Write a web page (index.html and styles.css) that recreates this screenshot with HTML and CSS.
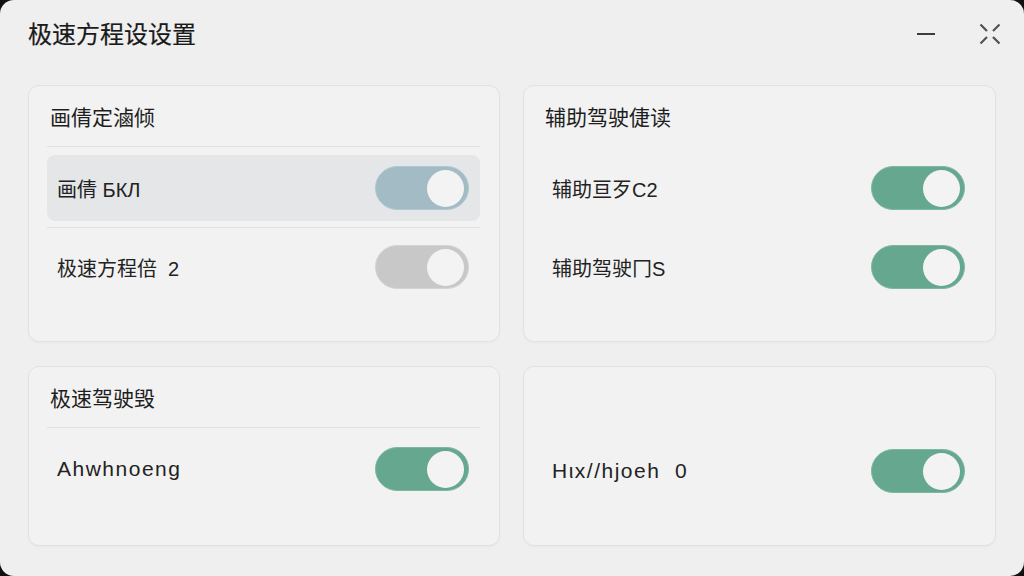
FILE: index.html
```html
<!DOCTYPE html>
<html lang="zh">
<head>
<meta charset="utf-8">
<title>极速方程设设置</title>
<link rel="stylesheet" href="styles.css">
</head>
<body>
<div class="window">
  <header class="titlebar">
    <h1 class="title">极速方程设设置</h1>
    <div class="controls">
      <span class="ctrl minimize"><span class="dash"></span></span>
      <span class="ctrl close">
        <svg width="22" height="22" viewBox="0 0 22 22" fill="none" stroke="#505050" stroke-width="2.2" stroke-linecap="butt">
          <line x1="1.5" y1="1.5" x2="8" y2="8"/>
          <line x1="20.5" y1="1.5" x2="14" y2="8"/>
          <line x1="1.5" y1="20.5" x2="8" y2="14"/>
          <line x1="20.5" y1="20.5" x2="14" y2="14"/>
        </svg>
      </span>
    </div>
  </header>
  <main class="grid">
    <section class="card">
      <div class="card-head">画倩定滷倾</div>
      <div class="row active">
        <span class="label">画倩 БКЛ</span>
        <span class="toggle blue"><span class="knob"></span></span>
      </div>
      <div class="divider"></div>
      <div class="row">
        <span class="label">极速方程倍&nbsp;&nbsp;2</span>
        <span class="toggle grey"><span class="knob"></span></span>
      </div>
    </section>
    <section class="card plain">
      <div class="card-head">辅助驾驶倢读</div>
      <div class="row">
        <span class="label">辅助亘歹C2</span>
        <span class="toggle green"><span class="knob"></span></span>
      </div>
      <div class="divider"></div>
      <div class="row">
        <span class="label">辅助驾驶冂S</span>
        <span class="toggle green"><span class="knob"></span></span>
      </div>
    </section>
    <section class="card">
      <div class="card-head">极速驾驶毁</div>
      <div class="row">
        <span class="label latin">Ahwhnoeng</span>
        <span class="toggle green"><span class="knob"></span></span>
      </div>
    </section>
    <section class="card plain">
      <div class="card-head"></div>
      <div class="row low">
        <span class="label latin">Hιx//hjoeh&nbsp;&nbsp;0</span>
        <span class="toggle green"><span class="knob"></span></span>
      </div>
    </section>
  </main>
</div>
</body>
</html>
```

FILE: styles.css
```css
* { box-sizing: border-box; margin: 0; padding: 0; }

html, body {
  width: 1024px;
  height: 576px;
  background: #111;
  overflow: hidden;
}

body {
  font-family: "Liberation Sans", "Noto Sans CJK SC", sans-serif;
  color: #222;
}

.window {
  width: 1024px;
  height: 576px;
  background: #efefef;
  border-radius: 14px;
  display: flex;
  flex-direction: column;
  padding: 0 28px 30px 28px;
}

.titlebar {
  height: 85px;
  display: flex;
  align-items: flex-start;
  justify-content: space-between;
}

.title {
  font-family: "Noto Sans CJK SC", sans-serif;
  font-size: 24px;
  font-weight: 400;
  line-height: 34px;
  margin-top: 16px;
  color: #1a1a1a;
  -webkit-text-stroke: 0.2px #1a1a1a;
}

.controls {
  display: flex;
  align-items: center;
  gap: 44px;
  margin-top: 23px;
  margin-right: -5px;
}

.ctrl {
  display: flex;
  align-items: center;
  justify-content: center;
  height: 22px;
}

.dash {
  display: block;
  width: 18px;
  height: 2px;
  background: #3c3c3c;
}

.grid {
  flex: 1;
  display: grid;
  grid-template-columns: 472px 473px;
  grid-template-rows: 257px 180px;
  column-gap: 23px;
  row-gap: 24px;
}

.card {
  background: #f2f2f2;
  border: 1px solid #e2e2e2;
  border-radius: 11px;
  padding: 16px 19px 0 18px;
  box-shadow: 0 1px 2px rgba(0, 0, 0, 0.03);
}

.card-head {
  font-family: "Noto Sans CJK SC", sans-serif;
  font-size: 21px;
  line-height: 28px;
  height: 45px;
  padding: 0 3px;
  border-bottom: 1px solid #e1e1e1;
  color: #1e1e1e;
}

.plain .card-head,
.plain .divider {
  border-color: transparent;
  background: transparent;
}

.row {
  height: 66px;
  margin-top: 8px;
  display: flex;
  align-items: center;
  justify-content: space-between;
  padding: 0 11px 0 10px;
  border-radius: 8px;
}

.row.low {
  margin-top: 10px;
}

.divider {
  height: 1px;
  margin: 6px 0 0;
  background: #e1e1e1;
}

.divider + .row {
  margin-top: 6px;
}

.row.active {
  background: #e4e6e8;
}

.label {
  font-family: "Liberation Sans", "Noto Sans CJK SC", sans-serif;
  font-size: 20px;
  color: #222;
}

.label.latin {
  font-size: 21px;
  letter-spacing: 1.5px;
}

.toggle {
  width: 94px;
  height: 44px;
  border-radius: 22px;
  display: flex;
  align-items: center;
  justify-content: flex-end;
  padding: 0 4px;
}

.toggle.green {
  background: #66a88f;
  border: 1.5px solid #7db9a2;
}

.toggle.blue {
  background: #a3bbc4;
  border: 1.5px solid #b2c8d0;
}

.toggle.grey {
  background: #c8c8c8;
  border: 1.5px solid #d4d4d4;
}

.knob {
  width: 37px;
  height: 37px;
  border-radius: 50%;
  background: #f3f3f3;
}
```
